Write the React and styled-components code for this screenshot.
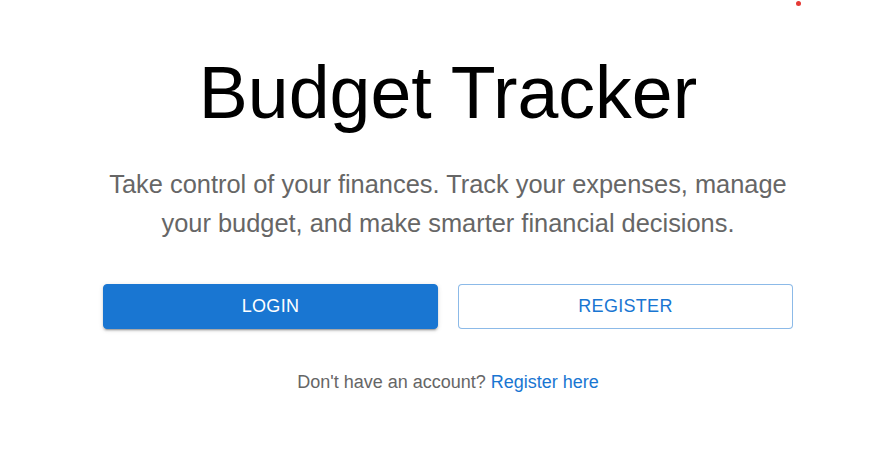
import React from "react";
import styled, { createGlobalStyle } from "styled-components";

const GlobalStyle = createGlobalStyle`
  body {
    margin: 0;
    background: #fff;
    font-family: "Liberation Sans", Arial, sans-serif;
  }
`;

const Page = styled.div`
  position: relative;
  width: 100%;
  min-height: 474px;
`;

const Dot = styled.span`
  position: absolute;
  top: 1px;
  left: 796px;
  width: 5px;
  height: 5px;
  border-radius: 50%;
  background: #e53935;
`;

const Content = styled.main`
  width: 690px;
  margin: 0 auto;
  padding-top: 49px;
  display: flex;
  flex-direction: column;
  align-items: center;
  text-align: center;
  transform: translateX(1px);
`;

const Title = styled.h1`
  margin: 0;
  font-size: 73.5px;
  font-weight: 400;
  line-height: 88px;
  color: #000;
`;

const Subtitle = styled.p`
  margin: 28px 0 0;
  font-size: 25.4px;
  line-height: 39px;
  color: #666;
`;

const Actions = styled.div`
  width: 100%;
  margin-top: 41px;
  display: grid;
  grid-template-columns: 1fr 1fr;
  gap: 20px;
`;

const Button = styled.button`
  height: 45px;
  border-radius: 4px;
  font-family: inherit;
  font-size: 18px;
  letter-spacing: 0.3px;
  text-transform: uppercase;
  cursor: pointer;
  border: 1px solid ${(p) => (p.$outlined ? "rgba(25,118,210,0.5)" : "#1976d2")};
  background: ${(p) => (p.$outlined ? "#fff" : "#1976d2")};
  color: ${(p) => (p.$outlined ? "#1976d2" : "#fff")};
  box-shadow: ${(p) =>
    p.$outlined
      ? "none"
      : "0px 3px 1px -2px rgba(0,0,0,0.2), 0px 2px 2px 0px rgba(0,0,0,0.14), 0px 1px 5px 0px rgba(0,0,0,0.12)"};
`;

const Footer = styled.p`
  margin: 40px 0 0;
  font-size: 18px;
  line-height: 1.5;
  color: #666;
`;

const Link = styled.a`
  color: #1976d2;
  text-decoration: none;
`;

const App = () => {
  return (
    <Page>
      <GlobalStyle />
      <Dot />
      <Content>
        <Title>Budget Tracker</Title>
        <Subtitle>
          Take control of your finances. Track your expenses, manage
          <br />
          your budget, and make smarter financial decisions.
        </Subtitle>
        <Actions>
          <Button>Login</Button>
          <Button $outlined>Register</Button>
        </Actions>
        <Footer>
          Don't have an account? <Link href="#">Register here</Link>
        </Footer>
      </Content>
    </Page>
  );
};

export default App;
